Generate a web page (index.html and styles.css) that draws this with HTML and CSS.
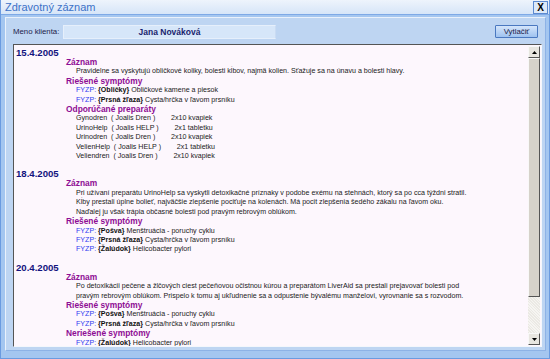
FILE: index.html
```html
<!DOCTYPE html>
<html lang="sk">
<head>
    <meta charset="UTF-8">
    <title>Zdravotný záznam</title>
    <link rel="stylesheet" href="styles.css">
</head>
<body>
<div class="window">
    <div class="titlebar">
        <span class="title">Zdravotný záznam</span>
        <span class="close">X</span>
    </div>
    <div class="panel">
        <div class="client-row">
            <span class="client-label">Meno klienta:</span>
            <div class="client-name">Jana Nováková</div>
            <button class="print">Vytlačiť</button>
        </div>
        <div class="record">
            <div class="record-body">
                <div class="day">
                    <div class="date">15.4.2005</div>
                    <div class="head">Záznam</div>
                    <div class="txt">Pravidelne sa vyskytujú obličkové koliky, bolesti kĺbov, najmä kolien. Sťažuje sa na únavu a bolesti hlavy.</div>
                    <div class="head">Riešené symptómy</div>
                    <div class="txt"><span class="fyzp">FYZP:</span> <b>{Obličky}</b> Obličkové kamene a piesok</div>
                    <div class="txt"><span class="fyzp">FYZP:</span> <b>{Prsná žľaza}</b> Cysta/hrčka v ľavom prsníku</div>
                    <div class="head">Odporúčané preparáty</div>
                    <div class="txt pre">Gynodren  ( Joalis Dren )        2x10 kvapiek</div>
                    <div class="txt pre">UrinoHelp  ( Joalis HELP )        2x1 tabletku</div>
                    <div class="txt pre">Urinodren  ( Joalis Dren )        2x10 kvapiek</div>
                    <div class="txt pre">VelienHelp  ( Joalis HELP )        2x1 tabletku</div>
                    <div class="txt pre">Veliendren  ( Joalis Dren )        2x10 kvapiek</div>
                </div>
                <div class="day">
                    <div class="date">18.4.2005</div>
                    <div class="head">Záznam</div>
                    <div class="txt">Pri užívaní preparátu UrinoHelp sa vyskytli detoxikačné príznaky v podobe exému na stehnách, ktorý sa po cca týždni stratil.<br>Kĺby prestali úplne bolieť, najväčšie zlepšenie pociťuje na kolenách. Má pocit zlepšenia šedého zákalu na ľavom oku.<br>Naďalej ju však trápia občasné bolesti pod pravým rebrovým oblúkom.</div>
                    <div class="head">Riešené symptómy</div>
                    <div class="txt"><span class="fyzp">FYZP:</span> <b>{Pošva}</b> Menštruácia - poruchy cyklu</div>
                    <div class="txt"><span class="fyzp">FYZP:</span> <b>{Prsná žľaza}</b> Cysta/hrčka v ľavom prsníku</div>
                    <div class="txt"><span class="fyzp">FYZP:</span> <b>{Žalúdok}</b> Helicobacter pylori</div>
                </div>
                <div class="day">
                    <div class="date">20.4.2005</div>
                    <div class="head">Záznam</div>
                    <div class="txt">Po detoxikácii pečene a žlčových ciest pečeňovou očistnou kúrou a preparátom LiverAid sa prestali prejavovať bolesti pod<br>pravým rebrovým oblúkom. Prispelo k tomu aj ukľudnenie sa a odpustenie bývalému manželovi, vyrovnanie sa s rozvodom.</div>
                    <div class="head">Riešené symptómy</div>
                    <div class="txt"><span class="fyzp">FYZP:</span> <b>{Pošva}</b> Menštruácia - poruchy cyklu</div>
                    <div class="txt"><span class="fyzp">FYZP:</span> <b>{Prsná žľaza}</b> Cysta/hrčka v ľavom prsníku</div>
                    <div class="head">Neriešené symptómy</div>
                    <div class="txt"><span class="fyzp">FYZP:</span> <b>{Žalúdok}</b> Helicobacter pylori</div>
                </div>
            </div>
            <div class="scrollbar">
                <div class="arrow"><svg width="5" height="3" viewBox="0 0 5 3"><path d="M2.5 0 L5 3 L0 3 Z" fill="#000"/></svg></div>
                <div class="thumb"></div>
                <div class="track"></div>
                <div class="arrow"><svg width="5" height="3" viewBox="0 0 5 3"><path d="M0 0 L5 0 L2.5 3 Z" fill="#000"/></svg></div>
            </div>
        </div>
    </div>
</div>
</body>
</html>
```

FILE: styles.css
```css
* { box-sizing: border-box; }
body { margin: 0; font-family: "Liberation Sans", Arial, sans-serif; background: #9dc0ee; }
.window { width: 550px; height: 359px; display: flex; flex-direction: column; background: #a4c6f0; border: 1px solid #6b9be0; border-top: none; overflow: hidden; }
.titlebar { height: 15px; flex: none; display: flex; align-items: center; justify-content: space-between; padding: 0 1px 0 4px; background: linear-gradient(#eef4fc, #d6e5f8); border-bottom: 1px solid #7ea9e6; }
.title { font-size: 11px; color: #3d72c8; }
.close { width: 15px; height: 13px; display: flex; align-items: center; justify-content: center; font-size: 10px; font-weight: bold; color: #000; background: #dde9f8; border: 1px solid #5d8ad0; }
.panel { flex: 1; min-height: 0; margin: 2px 3px 7px 4px; background: #bed5f2; border-top: 1px solid #eaf1fb; border-left: 1px solid #eaf1fb; border-right: 1px solid #8db2e6; border-bottom: 1px solid #8db2e6; display: flex; flex-direction: column; padding: 5px 3px 3px 7px; }
.client-row { display: flex; align-items: center; height: 17px; flex: none; }
.client-label { font-size: 7.8px; color: #1b1b4a; width: 50px; }
.client-name { width: 213px; height: 14px; background: #d6e6f9; border: 1px solid #e6effb; border-right-color: #c9dbf3; font-size: 8.5px; font-weight: bold; color: #1a1f6e; text-align: center; line-height: 12px; }
.print { margin-left: auto; margin-right: 4px; width: 43px; height: 13px; padding: 0; font-family: inherit; font-size: 7.8px; color: #1b1b4a; background: linear-gradient(#d4e5fb, #9fc2ef); border: 1px solid #4a78c0; border-radius: 1px; }
.record { flex: 1; min-height: 0; margin-top: 4px; display: flex; background: #fdf7fd; border-top: 1px solid #555; border-left: 1px solid #555; border-right: 1px solid #f4f7fc; border-bottom: 1px solid #f4f7fc; overflow: hidden; }
.record-body { flex: 1; min-width: 0; padding: 3px 0 0 2px; overflow: hidden; white-space: nowrap; }
.day + .day { margin-top: 8px; }
.date { font-size: 9.6px; font-weight: bold; color: #13137e; line-height: 10px; }
.head { margin-left: 50px; font-size: 8.4px; font-weight: bold; color: #8e0d94; line-height: 9.4px; }
.txt { margin-left: 60px; font-size: 7.1px; color: #1a1a1a; line-height: 9.4px; }
.pre { white-space: pre; }
.txt b { color: #111; }
.fyzp { color: #2f3cf0; }
.scrollbar { width: 12px; flex: none; margin: 1px 1px 1px 0; display: flex; flex-direction: column; }
.arrow { height: 12px; flex: none; display: flex; align-items: center; justify-content: center; background: #e8e6e0; border: 1px solid #f8f8f8; border-right-color: #555; border-bottom-color: #555; }
.thumb { height: 239px; flex: none; background: #d6d2ca; border: 1px solid #f8f8f8; border-right-color: #555; border-bottom-color: #555; }
.track { flex: 1; background: repeating-linear-gradient(45deg, #ebe9e4 0 1px, #f6f5f2 1px 2px); }
```
